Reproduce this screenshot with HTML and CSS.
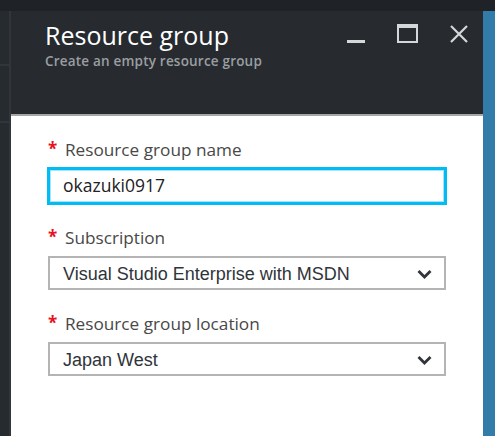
FILE: index.html
```html
<!DOCTYPE html>
<html lang="en">
<head>
    <meta charset="UTF-8">
    <meta name="viewport" content="width=device-width, initial-scale=1.0">
    <title>Resource group</title>
    <link rel="stylesheet" href="styles.css">
</head>
<body>

    <div class="topbar"></div>

    <div class="workspace">
        <div class="side-strip">
            <div class="strip-cell strip-first"></div>
            <div class="strip-cell strip-second"></div>
        </div>

        <div class="blade">
            <div class="blade-header">
                <div class="titles">
                    <h1>Resource group</h1>
                    <div class="subtitle">Create an empty resource group</div>
                </div>
                <div class="window-controls">
                    <span class="ctrl ctrl-min"><span class="min-bar"></span></span>
                    <span class="ctrl ctrl-max"><span class="max-box"></span></span>
                    <span class="ctrl ctrl-close">
                        <svg width="18" height="18" viewBox="0 0 18 18">
                            <path d="M1 1 L17 17 M17 1 L1 17" stroke="#d6d7d8" stroke-width="2.2" fill="none"/>
                        </svg>
                    </span>
                </div>
            </div>

            <div class="blade-body">
                <div class="field">
                    <label class="field-label"><span class="req">*</span>Resource group name</label>
                    <input class="text-input" type="text" value="okazuki0917">
                </div>

                <div class="field">
                    <label class="field-label"><span class="req">*</span>Subscription</label>
                    <div class="dropdown">
                        <span>Visual Studio Enterprise with MSDN</span>
                        <svg class="chevron" width="15" height="10" viewBox="0 0 15 10">
                            <path d="M1.5 2 L7.5 8 L13.5 2" stroke="#30353b" stroke-width="2.8" fill="none"/>
                        </svg>
                    </div>
                </div>

                <div class="field">
                    <label class="field-label"><span class="req">*</span>Resource group location</label>
                    <div class="dropdown">
                        <span>Japan West</span>
                        <svg class="chevron" width="15" height="10" viewBox="0 0 15 10">
                            <path d="M1.5 2 L7.5 8 L13.5 2" stroke="#30353b" stroke-width="2.8" fill="none"/>
                        </svg>
                    </div>
                </div>
            </div>
        </div>

        <div class="right-strip"></div>
    </div>

</body>
</html>
```

FILE: styles.css
```css
body {
    margin: 0;
    padding: 0;
    background-color: #1f2328;
    font-family: "Open Sans", "Noto Sans", sans-serif;
    height: 436px;
    overflow: hidden;
}
.topbar {
    height: 11px;
    background-color: #1f2328;
}
.workspace {
    display: flex;
    height: 425px;
}
.side-strip {
    width: 9px;
    border-right: 2px solid #30363c;
    background-color: #262b30;
}
.strip-cell {
    border-bottom: 2px solid #30363c;
}
.strip-first {
    height: 53px;
}
.strip-second {
    height: 55px;
}
.blade {
    width: 472px;
    display: flex;
    flex-direction: column;
    background-color: #fff;
}
.blade-header {
    height: 105px;
    background-color: #272b30;
    border-bottom: 2px solid #a6a6a6;
    display: flex;
    justify-content: space-between;
    box-sizing: border-box;
    padding: 7px 0 0 34px;
}
h1 {
    margin: 0;
    font-size: 25px;
    font-weight: 400;
    line-height: 34px;
    color: #fff;
}
.subtitle {
    font-size: 13.5px;
    letter-spacing: 0.2px;
    font-weight: 600;
    color: #9a9ea2;
    line-height: 19px;
}
.window-controls {
    display: flex;
    align-items: flex-start;
    padding-top: 6px;
    padding-right: 15px;
}
.ctrl {
    height: 19px;
    display: flex;
}
.ctrl-min {
    width: 18px;
    align-items: flex-end;
}
.min-bar {
    width: 18px;
    height: 3px;
    background-color: #d6d7d8;
}
.ctrl-max {
    margin-left: 32px;
}
.max-box {
    width: 17px;
    height: 13px;
    border: 2px solid #d6d7d8;
    border-top-width: 4px;
}
.ctrl-close {
    margin-left: 32px;
    align-items: center;
}
.blade-body {
    padding: 23px 37px 0 37px;
}
.field {
    margin-bottom: 23px;
}
.field-label {
    display: flex;
    align-items: flex-start;
    height: 22px;
    line-height: 22px;
    font-size: 17.2px;
    color: #484848;
    margin-bottom: 7px;
}
.req {
    color: #e81123;
    font-size: 17px;
    font-weight: 700;
    width: 17px;
    line-height: 20px;
}
.text-input {
    display: block;
    box-sizing: border-box;
    width: 398px;
    height: 36px;
    margin: 0;
    padding: 0 0 2px 13px;
    border: 2px solid #00bcf2;
    box-shadow: 0 0 0 1px #00bcf2, inset 0 0 0 1px #a6e4f8;
    outline: none;
    font-family: "Open Sans", "Noto Sans", sans-serif;
    font-size: 17.5px;
    color: #222;
}
.dropdown {
    box-sizing: border-box;
    width: 398px;
    height: 34px;
    border: 2px solid #b4b4b4;
    display: flex;
    align-items: center;
    justify-content: space-between;
    padding: 2px 12px 0 13px;
    font-family: "Liberation Sans", Arial, sans-serif;
    font-size: 18px;
    color: #2f343a;
}
.chevron {
    display: block;
}
.right-strip {
    width: 12px;
    background-color: #317ca8;
}
```
